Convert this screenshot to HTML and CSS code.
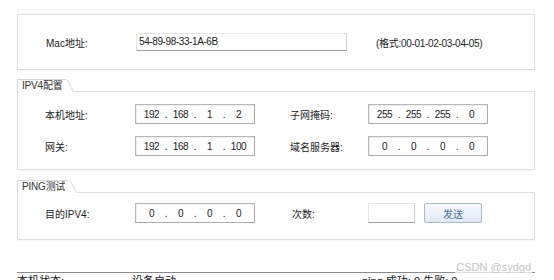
FILE: index.html
```html
<!DOCTYPE html>
<html>
<head>
<meta charset="utf-8">
<link rel="stylesheet" href="styles.css">
</head>
<body>
<div class="page">
  <div class="frame">
    <div class="panel mac-panel">
      <span class="lbl">Mac地址:</span>
      <div class="flat-input mac-input">54-89-98-33-1A-6B</div>
      <span class="hint">(格式:00-01-02-03-04-05)</span>
    </div>
  </div>

  <div class="group">
    <div class="tab">
      <span class="tab-label">IPV4配置</span>
      <svg class="tab-slant" width="12" height="13" viewBox="0 0 12 13"><path d="M0 0.5 H3 Q5 0.5 6 2 L11.5 13 H0 Z" fill="#fff"/><path d="M0 0.5 H3 Q5 0.5 6 2 L11.5 13" fill="none" stroke="#d8d8d8"/></svg>
    </div>
    <div class="panel ipv4-panel">
      <span class="lbl">本机地址:</span>
      <div class="ip-box"><span class="seg">192</span><span class="dot">.</span><span class="seg">168</span><span class="dot">.</span><span class="seg">1</span><span class="dot">.</span><span class="seg">2</span></div>
      <span class="lbl">子网掩码:</span>
      <div class="ip-box"><span class="seg">255</span><span class="dot">.</span><span class="seg">255</span><span class="dot">.</span><span class="seg">255</span><span class="dot">.</span><span class="seg">0</span></div>
      <span class="lbl">网关:</span>
      <div class="ip-box"><span class="seg">192</span><span class="dot">.</span><span class="seg">168</span><span class="dot">.</span><span class="seg">1</span><span class="dot">.</span><span class="seg">100</span></div>
      <span class="lbl">域名服务器:</span>
      <div class="ip-box"><span class="seg">0</span><span class="dot">.</span><span class="seg">0</span><span class="dot">.</span><span class="seg">0</span><span class="dot">.</span><span class="seg">0</span></div>
    </div>
  </div>

  <div class="group ping-group">
    <div class="tab">
      <span class="tab-label">PING测试</span>
      <svg class="tab-slant" width="12" height="13" viewBox="0 0 12 13"><path d="M0 0.5 H3 Q5 0.5 6 2 L11.5 13 H0 Z" fill="#fff"/><path d="M0 0.5 H3 Q5 0.5 6 2 L11.5 13" fill="none" stroke="#d8d8d8"/></svg>
    </div>
    <div class="panel ping-panel">
      <span class="lbl">目的IPV4:</span>
      <div class="ip-box"><span class="seg">0</span><span class="dot">.</span><span class="seg">0</span><span class="dot">.</span><span class="seg">0</span><span class="dot">.</span><span class="seg">0</span></div>
      <span class="lbl">次数:</span>
      <div class="count-row">
        <div class="flat-input count-input"></div>
        <button class="send-btn">发送</button>
      </div>
    </div>
  </div>

  <div class="status">
    <span class="st-a">本机状态:</span>
    <span class="st-b">设备启动</span>
    <span class="st-c">ping 成功: 0 失败: 0</span>
  </div>
  <div class="watermark">CSDN @sydgd</div>
</div>
</body>
</html>
```

FILE: styles.css
```css
html, body {
  margin: 0;
  padding: 0;
  background: #fff;
}
body {
  font-family: "Liberation Sans", "Noto Sans CJK SC", sans-serif;
  font-size: 10px;
  color: #222;
  width: 554px;
  height: 280px;
  overflow: hidden;
}
.page {
  position: relative;
  padding: 9px 0 0 17px;
  width: 518px;
}
.frame {
  border-top: 1px solid #f2f2f2;
  padding-top: 4px;
}
.panel {
  box-sizing: border-box;
  border: 1px solid #dedede;
  background: #fff;
  box-shadow: 0 1px 2px rgba(0,0,0,0.04);
}
.mac-panel {
  height: 56px;
  display: flex;
  align-items: center;
  padding-left: 28px;
}
.mac-panel .lbl {
  width: 90px;
}
.flat-input {
  box-sizing: border-box;
  border: 1px solid #e6e6e6;
  border-bottom-color: #9a9a9a;
  border-right-color: #cfcfcf;
  background: #fff;
}
.mac-input {
  width: 211px;
  height: 18px;
  line-height: 16px;
  padding-left: 2px;
  letter-spacing: -0.4px;
}
.hint {
  margin-left: 29px;
  letter-spacing: -0.3px;
}
.group {
  margin-top: 9px;
}
.ping-group {
  margin-top: 10px;
}
.tab {
  position: relative;
  display: flex;
  height: 13px;
  margin-bottom: -1px;
}
.tab-label {
  box-sizing: border-box;
  height: 13px;
  border-top: 1px solid #d8d8d8;
  border-left: 1px solid #d8d8d8;
  background: #fff;
  padding: 0 0 0 4px;
  line-height: 12px;
  font-size: 10px;
  color: #333;
  letter-spacing: -0.2px;
}
.tab-slant {
  display: block;
}
.ipv4-panel {
  height: 79px;
  padding: 12px 0 0 27px;
  display: grid;
  grid-template-columns: 90px 120px 78px 120px;
  column-gap: 0;
  row-gap: 12px;
  grid-template-rows: 20px 20px;
  align-items: center;
  align-content: start;
}
.ipv4-panel .lbl:nth-child(3),
.ipv4-panel .lbl:nth-child(7) {
  margin-left: 35px;
}
.ipv4-panel {
  grid-template-columns: 90px 120px 113px 120px;
}
.ip-box {
  box-sizing: border-box;
  width: 120px;
  height: 20px;
  border: 1px solid #a9a9a9;
  border-top-color: #b8b8b8;
  border-left-color: #b8b8b8;
  box-shadow: inset 1px 1px 0 #f0f0f0;
  background: #fff;
  display: flex;
  align-items: center;
  padding-left: 4px;
  font-size: 10px;
  letter-spacing: -0.4px;
}
.seg {
  width: 23px;
  text-align: center;
}
.dot {
  width: 6px;
  text-align: center;
}
.ping-panel {
  height: 48px;
  padding: 10px 0 0 27px;
  display: grid;
  grid-template-columns: 90px 120px 113px auto;
  grid-template-rows: 20px;
  align-items: center;
  align-content: start;
}
.ping-panel .lbl:nth-child(3) {
  margin-left: 37px;
}
.count-row {
  display: flex;
  align-items: center;
  gap: 9px;
}
.count-input {
  width: 47px;
  height: 20px;
}
.send-btn {
  box-sizing: border-box;
  width: 58px;
  height: 20px;
  margin: 0;
  padding: 0;
  border: 1px solid #a7b9cc;
  border-radius: 2px;
  background: linear-gradient(#f7fafd, #dfe9f4);
  font-family: "Liberation Sans", "Noto Sans CJK SC", sans-serif;
  font-size: 10px;
  color: #4a77a8;
}
.status {
  margin-top: 32px;
  border-top: 1px solid #8a8a8a;
  display: flex;
  font-size: 11px;
  line-height: 13px;
  padding-top: 2px;
  color: #111;
}
.st-a {
  width: 115px;
}
.st-b {
  width: 230px;
}
.watermark {
  position: absolute;
  right: 3px;
  top: 261px;
  font-family: "Liberation Sans", sans-serif;
  font-size: 11px;
  color: #c4c4c4;
  background: rgba(255,255,255,0.7);
  padding: 0 1px;
}
```
